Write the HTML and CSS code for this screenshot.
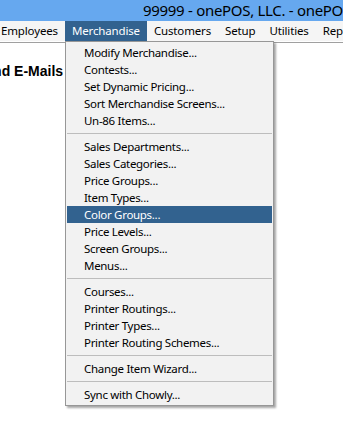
FILE: index.html
```html
<!DOCTYPE html>
<html lang="en">
<head>
    <meta charset="UTF-8">
    <meta name="viewport" content="width=device-width, initial-scale=1.0">
    <title>onePOS - Merchandise</title>
    <link rel="stylesheet" href="styles.css">
</head>
<body>

    <div class="titlebar">99999 - onePOS, LLC. - onePOS</div>

    <div class="menubar">
        <span class="menu-item">Employees</span>
        <span class="menu-item open">Merchandise</span>
        <span class="menu-item">Customers</span>
        <span class="menu-item">Setup</span>
        <span class="menu-item">Utilities</span>
        <span class="menu-item">Reports</span>
    </div>

    <div class="content">
        <h3 class="heading">Send E-Mails</h3>
    </div>

    <div class="dropdown">
        <div class="entry">Modify Merchandise...</div>
        <div class="entry">Contests...</div>
        <div class="entry">Set Dynamic Pricing...</div>
        <div class="entry">Sort Merchandise Screens...</div>
        <div class="entry">Un-86 Items...</div>
        <div class="sep"></div>
        <div class="entry">Sales Departments...</div>
        <div class="entry">Sales Categories...</div>
        <div class="entry">Price Groups...</div>
        <div class="entry">Item Types...</div>
        <div class="entry active">Color Groups...</div>
        <div class="entry">Price Levels...</div>
        <div class="entry">Screen Groups...</div>
        <div class="entry">Menus...</div>
        <div class="sep"></div>
        <div class="entry">Courses...</div>
        <div class="entry">Printer Routings...</div>
        <div class="entry">Printer Types...</div>
        <div class="entry">Printer Routing Schemes...</div>
        <div class="sep"></div>
        <div class="entry">Change Item Wizard...</div>
        <div class="sep"></div>
        <div class="entry">Sync with Chowly...</div>
    </div>

</body>
</html>
```

FILE: styles.css
```css
/* General */
body {
    margin: 0;
    width: 343px;
    height: 448px;
    overflow: hidden;
    background: #fff;
    font-family: "Noto Sans", "Open Sans", sans-serif;
    color: #000;
    position: relative;
}

/* Window title */
.titlebar {
    height: 21px;
    line-height: 21px;
    background: #66a8ef;
    padding-left: 143px;
    font-size: 15px;
    letter-spacing: -0.3px;
    white-space: nowrap;
    overflow: hidden;
}

/* Menu bar */
.menubar {
    display: flex;
    height: 20px;
    margin-left: -6px;
    background: #f5f5f5;
    white-space: nowrap;
    overflow: hidden;
}

.menu-item {
    padding: 0 7px;
    font-size: 11.5px;
    letter-spacing: -0.15px;
    line-height: 20px;
}

.menu-item.open {
    background: #32628f;
    color: #fff;
}

/* Window body */
.content {
    margin-top: 1px;
    border-top: 1px solid #a0a0a0;
    overflow: hidden;
}

.heading {
    margin: 20px 0 0 -24px;
    font-family: "Liberation Sans", Arial, sans-serif;
    font-size: 14px;
    font-weight: bold;
    white-space: nowrap;
}

/* Dropdown */
.dropdown {
    position: absolute;
    left: 65px;
    top: 41px;
    width: 209px;
    box-sizing: border-box;
    padding: 2px 1px;
    background: #f2f2f2;
    border: 1px solid #979797;
    box-shadow: 2px 2px 2px rgba(0, 0, 0, 0.35);
}

.entry {
    height: 17px;
    line-height: 17px;
    padding-left: 17px;
    font-size: 11.5px;
    letter-spacing: -0.3px;
    white-space: nowrap;
}

.entry.active {
    background: #32628f;
    color: #fff;
}

.sep {
    height: 9px;
    box-sizing: border-box;
    padding-top: 4px;
}

.sep:before {
    content: "";
    display: block;
    border-top: 1px solid #bdbdbd;
}
```
